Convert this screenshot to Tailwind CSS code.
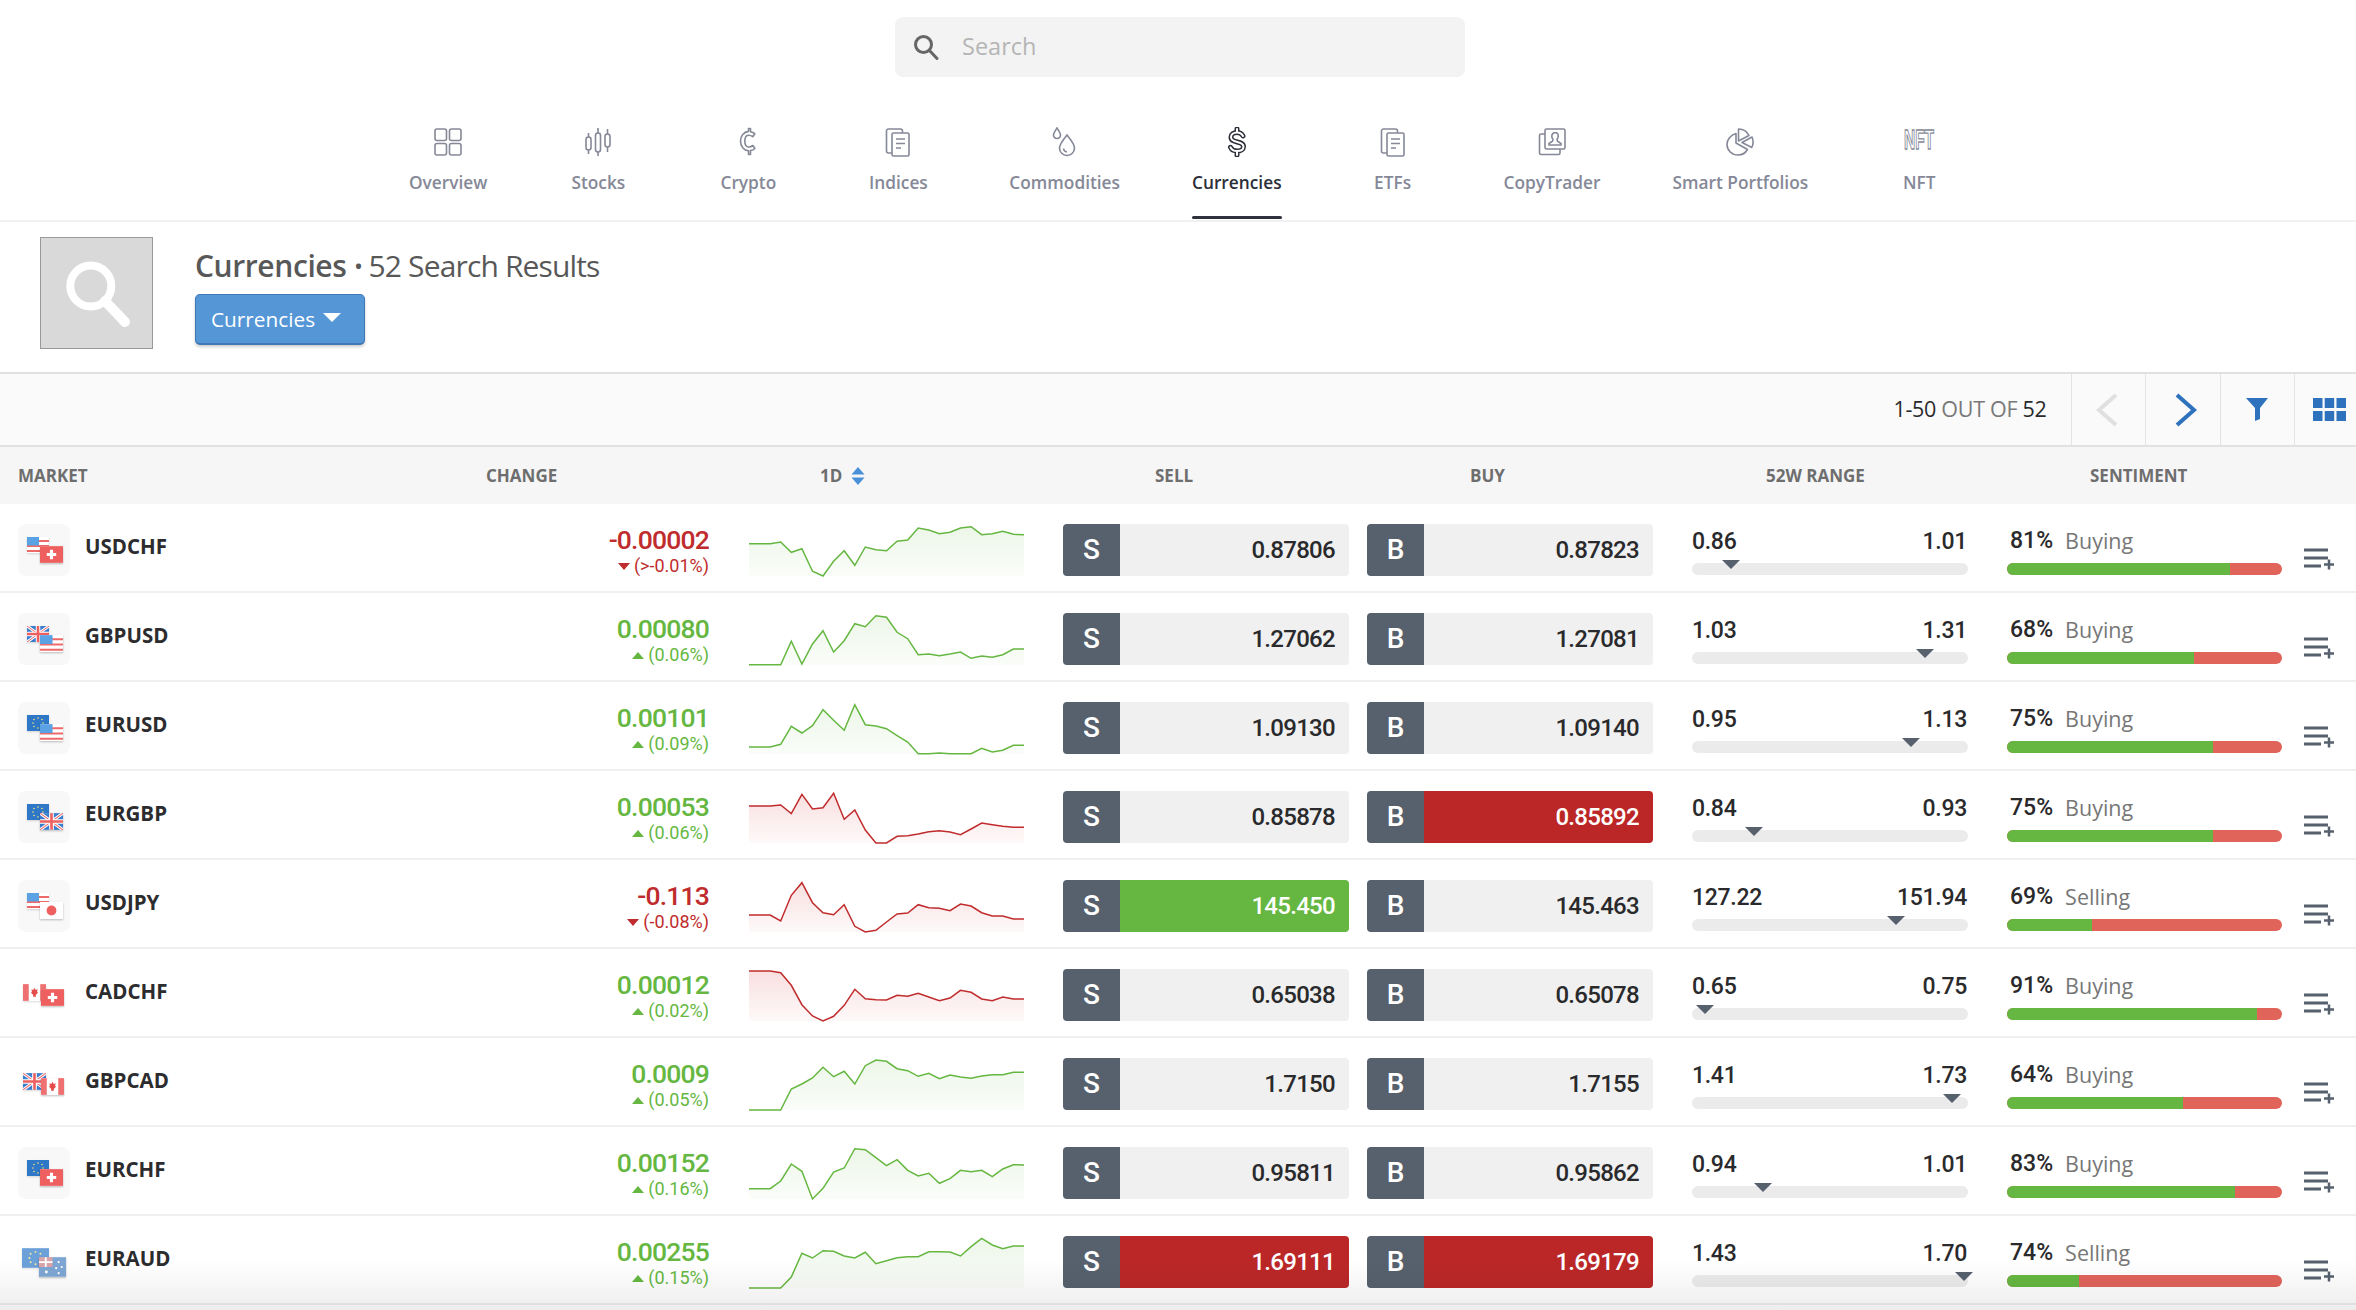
<!DOCTYPE html>
<html lang="en">
<head>
  <meta charset="UTF-8" />
  <title>Currencies</title>
  <script src="https://cdn.jsdelivr.net/npm/@tailwindcss/browser@4"></script>
</head>

<body class="relative w-[2356px] h-[1310px] overflow-hidden bg-white font-['Open_Sans',sans-serif] text-[#2a2a2c]">

  <!-- search -->
  <div class="h-[128px] pt-[17px] flex justify-center">
    <div class="w-[570px] h-[60px] rounded-lg bg-[#f3f3f3] flex items-center pl-[18px] gap-[23px] ml-[4px]">
      <svg class="w-[26px] h-[26px]" viewBox="0 0 26 26" fill="none" stroke="#666" stroke-width="3">
        <circle cx="10.5" cy="10.5" r="8" />
        <path d="M16.5 16.5 24 24.5" stroke-linecap="round" />
      </svg>
      <span class="text-[23.500px] text-[#b5b5b5]">Search</span>
    </div>
  </div>

  <!-- category nav -->
  <nav class="h-[94px] pl-[373px] flex border-b-2 border-[#f1f1f1] text-[17.300px] font-semibold text-[#858897]">
    <a class="min-w-[150px] px-[36px] flex flex-col items-center -mt-[1px]">
      <svg class="w-[30px] h-[30px]" viewBox="0 0 30 30" fill="none" stroke="currentColor" stroke-width="1.6">
        <rect x="2" y="2" width="11.5" height="11.5" rx="2" /><rect x="16.5" y="2" width="11.5" height="11.5" rx="2" />
        <rect x="2" y="16.5" width="11.5" height="11.5" rx="2" /><rect x="16.5" y="16.5" width="11.5" height="11.5" rx="2" />
      </svg>
      <span class="mt-[11px] leading-[30px]">Overview</span>
    </a>
    <a class="min-w-[150px] px-[36px] flex flex-col items-center -mt-[1px]">
      <svg class="w-[30px] h-[30px]" viewBox="0 0 30 30" fill="none" stroke="currentColor" stroke-width="1.6">
        <rect x="3" y="10" width="5" height="13" rx="2.5" /><path d="M5.5 6v4M5.5 23v4" />
        <rect x="12.5" y="6" width="5" height="19" rx="2.5" /><path d="M15 1v5M15 25v4" />
        <rect x="22" y="7" width="5" height="13" rx="2.5" /><path d="M24.5 2v5M24.5 20v5" />
      </svg>
      <span class="mt-[11px] leading-[30px]">Stocks</span>
    </a>
    <a class="min-w-[150px] px-[36px] flex flex-col items-center -mt-[1px]">
      <svg class="w-[30px] h-[30px]" viewBox="0 0 30 30" fill="none" stroke="currentColor" stroke-width="1.6" stroke-linejoin="round">
        <path d="M15.5 1.5h2v3.2c2 .4 3.400 1.200 4.300 2l-2 3c-1.500-1-3.200-1.600-4.600-1.400-2.200.3-3.400 2.400-3.400 5.800s1.300 5.600 3.500 5.900c1.500.2 3.100-.4 4.600-1.500l2 3c-1 1-2.500 1.800-4.400 2.100v3.900h-2v-3.700c-4.700-.4-8-4.700-8-9.700s3.300-9.200 8-9.700z" />
      </svg>
      <span class="mt-[11px] leading-[30px]">Crypto</span>
    </a>
    <a class="min-w-[150px] px-[36px] flex flex-col items-center -mt-[1px]">
      <svg class="w-[30px] h-[30px]" viewBox="0 0 30 30" fill="none" stroke="currentColor" stroke-width="1.6">
        <path d="M9 26H5.500a2 2 0 0 1-2-2V4a2 2 0 0 1 2-2h12a2 2 0 0 1 2 2v2" />
        <rect x="9" y="6" width="17" height="23" rx="1.500" />
        <path d="M13 12h9M13 16.500h9M13 21h5" />
      </svg>
      <span class="mt-[11px] leading-[30px]">Indices</span>
    </a>
    <a class="min-w-[150px] px-[36px] flex flex-col items-center -mt-[1px]">
      <svg class="w-[30px] h-[30px]" viewBox="0 0 30 30" fill="none" stroke="currentColor" stroke-width="1.6">
        <path d="M7 1c2 3 3.500 5 3.500 7.200A3.400 3.400 0 0 1 7 11.500a3.400 3.400 0 0 1-3.500-3.300C3.500 6 5 4 7 1z" />
        <path d="M17 8c4 5 7.500 9 7.500 13a7.500 7.500 0 0 1-15 0c0-4 3.500-8 7.500-13z" />
        <path d="M13.500 21.500c.3 2 1.500 3.300 3.500 3.500" />
      </svg>
      <span class="mt-[11px] leading-[30px]">Commodities</span>
    </a>
    <a class="relative min-w-[150px] px-[36px] flex flex-col items-center -mt-[1px] text-[#2b2e38]">
      <svg class="w-[30px] h-[30px]" viewBox="0 0 30 30" fill="none" stroke-linejoin="round" stroke-linecap="round">
        <path d="M15 2v3.500M15 24.500V28M21 9c-1-2-3-3.500-6-3.500-3.500 0-6 2-6 4.700 0 6.500 12.500 3 12.500 9.500 0 2.700-2.800 4.300-6.500 4.300-3 0-5.500-1.500-6.500-3.700" stroke="#2b2e38" stroke-width="5" />
        <path d="M15 2v3.500M15 24.500V28M21 9c-1-2-3-3.500-6-3.500-3.500 0-6 2-6 4.700 0 6.500 12.500 3 12.500 9.500 0 2.700-2.800 4.300-6.500 4.300-3 0-5.500-1.500-6.500-3.700" stroke="#fff" stroke-width="2" />
      </svg>
      <span class="mt-[11px] leading-[30px]">Currencies</span>
      <span class="absolute left-[36px] right-[36px] top-[89px] h-[3px] rounded-sm bg-[#2f323c]"></span>
    </a>
    <a class="min-w-[150px] px-[36px] flex flex-col items-center -mt-[1px]">
      <svg class="w-[30px] h-[30px]" viewBox="0 0 30 30" fill="none" stroke="currentColor" stroke-width="1.6">
        <path d="M9 26H5.500a2 2 0 0 1-2-2V4a2 2 0 0 1 2-2h12a2 2 0 0 1 2 2v2" />
        <rect x="9" y="6" width="17" height="23" rx="1.500" />
        <path d="M13 12h9M13 16.500h9M13 21h5" />
      </svg>
      <span class="mt-[11px] leading-[30px]">ETFs</span>
    </a>
    <a class="min-w-[150px] px-[36px] flex flex-col items-center -mt-[1px]">
      <svg class="w-[30px] h-[30px]" viewBox="0 0 30 30" fill="none" stroke="currentColor" stroke-width="1.6">
        <rect x="8" y="2" width="20" height="20" rx="1.500" />
        <path d="M8 7H4a1.500 1.500 0 0 0-1.500 1.500V26A1.500 1.500 0 0 0 4 27.500h17.500A1.500 1.500 0 0 0 23 26v-4" />
        <path d="M18 5.500c2.200 0 3.300 1.700 3.200 3.800 0 1.300-.6 2.400-1.200 3.200l.5 1.800 3.500 2.200v1.500H12v-1.500l3.500-2.200.5-1.800c-.6-.8-1.200-1.900-1.200-3.200-.1-2.100 1.500-3.800 3.700-3.800z" />
      </svg>
      <span class="mt-[11px] leading-[30px]">CopyTrader</span>
    </a>
    <a class="min-w-[150px] px-[36px] flex flex-col items-center -mt-[1px]">
      <svg class="w-[30px] h-[30px]" viewBox="0 0 30 30" fill="none" stroke="currentColor" stroke-width="1.6" stroke-linejoin="round">
        <path d="M11 6.500C5.500 8 2 12.500 2 17.500 2 23.500 7 28 13 28c4 0 7.500-2 9.500-5.500L11 16z" />
        <path d="M13.500 2c5 0 8.500 2.500 10.500 6.500l-10.500 5.500z" />
        <path d="M17 15.500 27 10c1.500 3.500 1.500 7-.2 10.500z" />
      </svg>
      <span class="mt-[11px] leading-[30px]">Smart Portfolios</span>
    </a>
    <a class="min-w-[150px] px-[36px] flex flex-col items-center -mt-[1px]">
      <svg class="w-[30px] h-[30px] overflow-visible" viewBox="0 0 30 30">
        <text x="15" y="22" text-anchor="middle" font-family="'Liberation Sans',sans-serif" font-weight="700" font-size="27" textLength="30" lengthAdjust="spacingAndGlyphs" fill="#fff" stroke="#858897" stroke-width="1.3">NFT</text>
      </svg>
      <span class="mt-[11px] leading-[30px]">NFT</span>
    </a>
  </nav>

  <!-- page head -->
  <section class="h-[150px] pl-[40px] pt-[15px] flex items-start">
    <div class="w-[113px] h-[112px] bg-[#d9d9d9] border border-[#9a9a9a] flex items-center justify-center">
      <svg class="w-[72px] h-[72px]" viewBox="0 0 72 72" fill="none" stroke="#fff">
        <circle cx="29.800" cy="29" r="20.500" stroke-width="8" />
        <path d="M44 44 64 65" stroke-width="10" stroke-linecap="round" />
      </svg>
    </div>
    <div class="ml-[42px]">
      <h1 class="mt-[6px] h-[50px] leading-[46px] text-[30px] text-[#585858] tracking-[-0.4px]">
        <span class="font-semibold">Currencies</span> <span class="text-[24px] align-[2px]">•</span><span class="ml-[6px] tracking-[-0.85px]">52 Search Results</span>
      </h1>
      <button class="w-[170px] h-[51px] mt-[1px] pt-[2px] rounded-[5px] bg-[#5596d6] border border-[#3f78b6] border-b-2 shadow-[0_2px_3px_rgba(0,0,0,0.2)] flex items-center pl-[15px] gap-[8px] text-[20.800px] text-white">
        Currencies
        <span class="w-0 h-0 border-x-[9px] border-x-transparent border-t-[9px] border-t-white mb-[5px]"></span>
      </button>
    </div>
  </section>

  <!-- toolbar -->
  <div class="h-[75px] bg-[#fafafa] border-y-2 border-[#e1e1e1] flex justify-end items-stretch">
    <div class="flex items-center pr-[24px] text-[21.500px] text-[#787878] tracking-[-0.3px]">
      <span class="text-[#2a2a2c]">1-50</span>&nbsp;OUT OF&nbsp;<span class="text-[#2a2a2c]">52</span>
    </div>
    <div class="w-[74.500px] border-l border-[#e3e3e3] flex items-center justify-center">
      <svg class="w-[24px] h-[36px] -ml-[2px]" viewBox="0 0 24 36" fill="none" stroke="#e0e0e0" stroke-width="4"><path d="M21 3 4 18l17 15" /></svg>
    </div>
    <div class="w-[74.500px] border-l border-[#e3e3e3] flex items-center justify-center">
      <svg class="w-[24px] h-[36px] ml-[7px]" viewBox="0 0 24 36" fill="none" stroke="#2e71bd" stroke-width="4"><path d="M3 3l17 15L3 33" /></svg>
    </div>
    <div class="w-[74.500px] border-l border-[#e3e3e3] flex items-center justify-center">
      <svg class="w-[22px] h-[23px]" viewBox="0 0 22 23" fill="#2e71bd"><path d="M0 0h22l-8 10v11l-5 2V10z" /></svg>
    </div>
    <div class="w-[62px] border-l border-[#e3e3e3] flex items-center justify-end pr-[10px]">
      <svg class="w-[33px] h-[23px]" viewBox="0 0 33 23" fill="#2e71bd">
        <rect width="9.500" height="10" /><rect x="11.700" width="9.500" height="10" /><rect x="23.500" width="9.500" height="10" />
        <rect y="13" width="9.500" height="10" /><rect x="11.700" y="13" width="9.500" height="10" /><rect x="23.500" y="13" width="9.500" height="10" />
      </svg>
    </div>
  </div>

  <!-- table header -->
  <div class="h-[57px] bg-[#f6f6f6] grid grid-cols-[468px_281px_314px_304px_325px_315px_349px] items-center text-[17px] font-bold text-[#6e6e6e]">
    <div class="pl-[18px]">MARKET</div>
    <div class="pl-[18px]">CHANGE</div>
    <div class="pl-[71px] flex items-center gap-[9px]">1D
      <svg class="w-[14px] h-[18px]" viewBox="0 0 14 18" fill="#4a90d9"><path d="M7 0l6.500 7.500H.5zM7 18 .5 10.500h13z" /></svg>
    </div>
    <div class="pl-[92px]">SELL</div>
    <div class="pl-[103px]">BUY</div>
    <div class="pl-[74px]">52W RANGE</div>
    <div class="pl-[83px]">SENTIMENT</div>
  </div>

  <!-- rows get rendered from the data below -->
  <div id="rows"></div>

  <!-- fade at the bottom edge of the window -->
  <div class="absolute left-0 right-0 bottom-0 h-[50px] bg-linear-to-b from-black/0 to-black/7"></div>

  <script>
    const flags = {
      us: '<rect width="22" height="16" fill="#fff"/><path d="M0 3h22v2H0zM0 8h22v2H0zM0 13h22v2H0z" fill="#ee6a6a"/><rect width="12" height="8.500" fill="#5aa2e4"/>',
      ch: '<rect width="22" height="16" fill="#ee6060"/><path d="M9.500 3.500h3v3h3v3h-3v3h-3v-3h-3v-3h3z" fill="#fff"/>',
      gb: '<rect width="22" height="16" fill="#3a7ccc"/><path d="M0 0l22 16M22 0 0 16" stroke="#fff" stroke-width="3"/><path d="M0 0l22 16M22 0 0 16" stroke="#ee6a6a" stroke-width="1"/><path d="M11 0v16M0 8h22" stroke="#fff" stroke-width="4.500"/><path d="M11 0v16M0 8h22" stroke="#ee6060" stroke-width="2.500"/>',
      eu: '<rect width="22" height="16" fill="#2f78c8"/><circle cx="11" cy="3" r=".8" fill="#f5e27a"/><circle cx="15" cy="4.500" r=".8" fill="#f5e27a"/><circle cx="16" cy="8" r=".8" fill="#f5e27a"/><circle cx="15" cy="11.500" r=".8" fill="#f5e27a"/><circle cx="11" cy="13" r=".8" fill="#f5e27a"/><circle cx="7" cy="11.500" r=".8" fill="#f5e27a"/><circle cx="6" cy="8" r=".8" fill="#f5e27a"/><circle cx="7" cy="4.500" r=".8" fill="#f5e27a"/>',
      jp: '<rect width="22" height="16" fill="#fff"/><circle cx="11" cy="8" r="4.700" fill="#ee6060"/>',
      ca: '<rect width="22" height="16" fill="#fff"/><rect width="5.500" height="16" fill="#ee7070"/><rect x="16.500" width="5.500" height="16" fill="#ee7070"/><path d="M11 3.500l1.200 2 1.800-.6-.6 2.900 1.200.3-2.400 2.200.2 1.700h-2.800l.2-1.700-2.400-2.200 1.200-.3-.6-2.900 1.800.6z" fill="#e64d4d"/>',
      au: '<rect width="22" height="16" fill="#7ea6d4"/><circle cx="6" cy="12" r="1.200" fill="#fff"/><circle cx="16" cy="4" r=".9" fill="#fff"/><circle cx="18.500" cy="8" r=".9" fill="#fff"/><circle cx="14" cy="9" r=".9" fill="#fff"/><circle cx="16" cy="13" r=".9" fill="#fff"/><rect width="11" height="8" fill="#d9a3aa"/><path d="M5.500 0v8M0 4h11" stroke="#fff" stroke-width="1.500"/>',
    };

    // market, flags, has tile, change, pct, up?, sell, sell flash, buy, buy flash, low, high, marker x, sentiment, side, spark rising?, spark heights
    const data = [
      ['USDCHF','us','ch',true,'-0.00002','(>-0.01%)',false,'0.87806','','0.87823','','0.86','1.01',39,81,'Buying',true,[97,97,97,102,71,82,14,0,44,76,32,87,79,76,104,108,144,138,127,131,144,148,124,127,134,125,124]],
      ['GBPUSD','gb','us',true,'0.00080','(0.06%)',true,'1.27062','','1.27081','','1.03','1.31',233,68,'Buying',true,[1,1,1,1,71,3,63,103,39,73,124,115,148,143,98,79,31,33,28,33,39,20,27,23,31,48,48]],
      ['EURUSD','eu','us',true,'0.00101','(0.09%)',true,'1.09130','','1.09140','','0.95','1.13',219,75,'Buying',true,[21,21,21,29,83,63,85,133,101,71,148,88,84,76,55,36,1,1,3,1,1,1,17,6,11,26,26]],
      ['EURGBP','eu','gb',true,'0.00053','(0.06%)',true,'0.85878','','0.85892','red','0.84','0.93',62,75,'Buying',false,[111,111,111,114,88,146,102,106,149,71,99,39,0,0,20,22,27,34,37,33,25,42,60,55,50,47,47]],
      ['USDJPY','us','jp',true,'-0.113','(-0.08%)',false,'145.450','green','145.463','','127.22','151.94',204,69,'Selling',false,[51,51,51,33,110,148,88,58,52,82,17,0,5,30,54,57,82,73,71,64,84,78,58,48,48,39,39]],
      ['CADCHF','ca','ch',false,'0.00012','(0.02%)',true,'0.65038','','0.65078','','0.65','0.75',13,91,'Buying',false,[150,150,150,145,107,49,15,0,14,47,95,67,64,63,77,74,83,72,61,69,92,86,66,61,72,66,66]],
      ['GBPCAD','gb','ca',false,'0.0009','(0.05%)',true,'1.7150','','1.7155','','1.41','1.73',260,64,'Buying',true,[0,0,0,0,63,78,96,128,100,116,78,133,150,146,124,118,101,110,94,105,99,95,102,106,106,113,113]],
      ['EURCHF','eu','ch',true,'0.00152','(0.16%)',true,'0.95811','','0.95862','','0.94','1.01',71,83,'Buying',true,[31,31,31,54,105,83,0,32,81,93,151,148,124,100,118,86,69,77,47,61,86,82,86,67,90,103,102]],
      ['EURAUD','eu','au',false,'0.00255','(0.15%)',true,'1.69111','red','1.69179','red','1.43','1.70',272,74,'Selling',true,[0,0,0,0,33,104,90,112,110,96,90,107,73,82,91,94,94,109,109,108,96,124,149,129,118,126,126]],
    ];

    const sparkline = (h, up) => {
      const color = up ? '#65b741' : '#c02c2d';
      const id = up ? 'sparkUp' : 'sparkDown';
      const pts = h.map((v, i) => `${(i * 275 / 26).toFixed(1)},${((156 - v) / 3).toFixed(1)}`).join(' ');
      return `<svg class="w-[275px] h-[52px] overflow-visible" viewBox="0 0 275 52">
        <defs><linearGradient id="${id}" x1="0" y1="0" x2="0" y2="1">
          <stop offset="0" stop-color="${up ? '#65b741' : '#d8383a'}" stop-opacity="${up ? '.12' : '.16'}"/>
          <stop offset="1" stop-color="${up ? '#65b741' : '#d8383a'}" stop-opacity=".03"/>
        </linearGradient></defs>
        <polygon points="0,52 ${pts} 275,52" fill="url(#${id})"/>
        <polyline points="${pts}" fill="none" stroke="${color}" stroke-width="1.500"/>
      </svg>`;
    };

    const priceBox = (letter, price, flash) => {
      let bg = 'bg-[#f0f0f0] text-[#2a2a2c]';
      if (flash === 'red') bg = 'bg-[#bb2727] text-white';
      if (flash === 'green') bg = 'bg-[#65b741] text-white';
      return `<div class="w-[286px] h-[52px] rounded-[4px] overflow-hidden flex">
        <div class="w-[57px] bg-[#56616d] text-white text-[28px] font-medium flex items-center justify-center font-['Roboto',sans-serif]">${letter}</div>
        <div class="flex-1 ${bg} text-[24px] font-medium tracking-[-0.7px] flex items-center justify-end pr-[14px] font-['Roboto',sans-serif]">${price}</div>
      </div>`;
    };

    // tile rows and bare rows place the two flags differently
    const flagPair = (f1, f2, tile, name) => {
      let a = 'left-[9px] top-[13px] w-[22px] h-[16px]';
      let b = 'left-[22px] top-[22px] w-[23px] h-[17px]';
      if (!tile) {
        a = 'left-[5px] top-[15px] w-[23px] h-[17px]';
        b = 'left-[23px] top-[20px] w-[23px] h-[17px]';
      }
      if (name === 'EURAUD') {
        a = 'left-[4px] top-[12px] w-[27px] h-[20px] opacity-70';
        b = 'left-[21px] top-[21px] w-[27px] h-[20px]';
      }
      return `<svg class="absolute ${a} shadow-[0_1px_2px_rgba(0,0,0,0.15)]" viewBox="0 0 22 16">${flags[f1]}</svg>
        <svg class="absolute ${b} bg-white shadow-[0_1px_2px_rgba(0,0,0,0.25)]" viewBox="0 0 22 16">${flags[f2]}</svg>`;
    };

    document.getElementById('rows').innerHTML = data.map(d => {
      const [name, f1, f2, tile, chg, pct, up, sell, sellFlash, buy, buyFlash, low, high, marker, sent, side, rising, spark] = d;
      const green = side === 'Buying' ? sent : 100 - sent;
      return `<div class="h-[89px] border-b-2 border-[#efefef] grid grid-cols-[468px_281px_314px_304px_325px_315px_349px] pt-[20px]">
        <div class="pl-[18px] flex items-start">
          <div class="relative w-[52px] h-[52px] rounded-[8px] ${tile ? 'bg-[#f8f8f8]' : ''}">${flagPair(f1, f2, tile, name)}</div>
          <span class="ml-[15px] mt-[8px] text-[20.500px] leading-[28px] font-bold text-[#2c2c2e]">${name}</span>
        </div>
        <div class="pr-[40px] text-right font-['Roboto',sans-serif] ${up ? 'text-[#65b741]' : 'text-[#c02c2d]'}">
          <div class="text-[26.500px] font-medium tracking-[-0.8px] leading-[32px]">${chg}</div>
          <div class="text-[18px] leading-[20px] flex items-center justify-end gap-[4px]">
            <span class="w-0 h-0 border-x-[6px] border-x-transparent ${up ? 'border-b-[7px] border-b-[#65b741]' : 'border-t-[7px] border-t-[#c02c2d]'}"></span>${pct}
          </div>
        </div>
        <div>${sparkline(spark, rising)}</div>
        <div>${priceBox('S', sell, sellFlash)}</div>
        <div>${priceBox('B', buy, buyFlash)}</div>
        <div class="relative w-[276px] font-['Roboto',sans-serif]">
          <div class="flex justify-between pr-[1px] text-[23px] font-medium tracking-[-0.3px] leading-[35px]"><span>${low}</span><span>${high}</span></div>
          <div class="mt-[4px] h-[12px] rounded-full bg-[#ebebeb]"></div>
          <span class="absolute top-[36px] w-0 h-0 border-x-[9px] border-x-transparent border-t-[9px] border-t-[#56616d]" style="left:${marker - 9}px"></span>
        </div>
        <div class="relative w-[349px]">
          <div class="pl-[3px] h-[35px] flex items-center gap-[12px]">
            <span class="font-['Roboto',sans-serif] font-medium text-[23px]">${sent}%</span>
            <span class="text-[21.500px] text-[#777]">${side}</span>
          </div>
          <div class="mt-[4px] w-[275px] h-[12px] rounded-full overflow-hidden flex bg-[#e0645a]">
            <div class="bg-[#65b741]" style="width:${green}%"></div>
          </div>
          <svg class="absolute left-[297px] top-[24px] w-[31px] h-[22px]" viewBox="0 0 31 22" fill="none" stroke="#56616d" stroke-width="3">
            <path d="M0 2h24M0 10h24M0 18h17" /><path d="M20 16.500h10M25 11.500v10" stroke-width="2.500" />
          </svg>
        </div>
      </div>`;
    }).join('');
  </script>
</body>
</html>
